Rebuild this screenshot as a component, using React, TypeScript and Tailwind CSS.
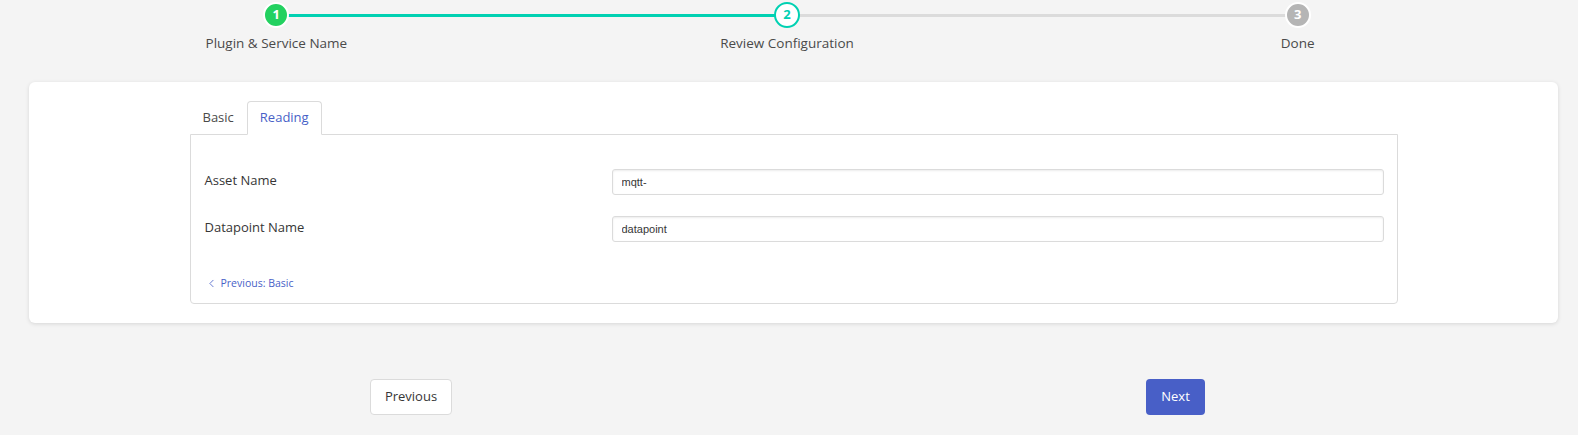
import React from 'react'
import { ChevronLeft } from 'lucide-react'

const steps = [
  { n: 1, label: 'Plugin & Service Name', state: 'done' },
  { n: 2, label: 'Review Configuration', state: 'active' },
  { n: 3, label: 'Done', state: 'todo' },
]

function Marker({ n, state }: { n: number; state: string }) {
  if (state === 'done') {
    return (
      <div className="relative z-10 w-[26px] h-[26px] rounded-full bg-[#23d160] border-2 border-white flex items-center justify-center text-white text-[13px] font-bold">
        {n}
      </div>
    )
  }
  if (state === 'active') {
    return (
      <div className="relative z-10 w-[26px] h-[26px] rounded-full bg-white border-2 border-[#00d1b2] flex items-center justify-center text-[#00d1b2] text-[13px] font-bold">
        {n}
      </div>
    )
  }
  return (
    <div className="relative z-10 w-[26px] h-[26px] rounded-full bg-[#b5b5b5] border-2 border-white flex items-center justify-center text-white text-[13px] font-bold">
      {n}
    </div>
  )
}

export default function App() {
  return (
    <div className="min-h-screen bg-[#f4f4f4] pt-[2px] font-['Open_Sans',sans-serif] text-[#4a4a4a]">
      {/* steps */}
      <div className="ml-[21px] w-[1532px] flex">
        {steps.map((s, i) => (
          <div key={s.n} className="relative flex-1 flex flex-col items-center">
            {i < steps.length - 1 && (
              <div
                className={`absolute top-[12px] left-1/2 w-full h-[3px] ${
                  s.state === 'done' ? 'bg-[#00d1b2]' : 'bg-[#dbdbdb]'
                }`}
              />
            )}
            <Marker n={s.n} state={s.state} />
            <div className="mt-[6px] text-[13.5px] leading-[18px] text-[#4a4a4a]">{s.label}</div>
          </div>
        ))}
      </div>

      {/* card */}
      <div className="mt-[30px] ml-[29px] w-[1529px] bg-white rounded-md shadow-[0_1px_4px_rgba(0,0,0,0.12)] pt-[19px] pb-[19px]">
        <div className="mx-auto w-[1208px]">
          <div className="flex items-end h-[33px]">
            <div className="px-[13px] h-[33px] flex items-center text-[13px] text-[#4a4a4a]">Basic</div>
            <div className="px-[12px] h-[34px] -mb-px flex items-center text-[13px] text-[#485fc7] bg-white border border-[#dbdbdb] border-b-white rounded-t-[4px] relative z-10">
              Reading
            </div>
          </div>
          <div className="border border-[#dbdbdb] rounded-b-[4px] pt-[34px] pb-[11px] pl-[14px] pr-[13px]">
            <div className="grid grid-cols-[393px_1fr] gap-x-[14px] gap-y-[21px] items-center">
              <div className="text-[13px] text-[#363636] -mt-[3px]">Asset Name</div>
              <input
                readOnly
                value="mqtt-"
                className="h-[26px] px-[9px] border border-[#dbdbdb] rounded-[3px] shadow-[inset_0_1px_2px_rgba(10,10,10,0.08)] text-[11px] text-[#363636] font-['Liberation_Sans',sans-serif] outline-none"
              />
              <div className="text-[13px] text-[#363636] -mt-[3px]">Datapoint Name</div>
              <input
                readOnly
                value="datapoint"
                className="h-[26px] px-[9px] border border-[#dbdbdb] rounded-[3px] shadow-[inset_0_1px_2px_rgba(10,10,10,0.08)] text-[11px] text-[#363636] font-['Liberation_Sans',sans-serif] outline-none"
              />
            </div>
            <div className="mt-[34px] flex items-center gap-[3px] text-[10.5px] text-[#485fc7]">
              <ChevronLeft size={13} strokeWidth={1.5} />
              <span>Previous: Basic</span>
            </div>
          </div>
        </div>
      </div>

      {/* buttons */}
      <div className="mt-[56px] ml-[370px] w-[835px] flex justify-between">
        <button className="h-[36px] w-[82px] bg-white border border-[#dbdbdb] rounded-[4px] text-[13px] text-[#363636]">
          Previous
        </button>
        <button className="h-[36px] w-[59px] bg-[#485fc7] rounded-[4px] text-[13px] text-white">
          Next
        </button>
      </div>
    </div>
  )
}
